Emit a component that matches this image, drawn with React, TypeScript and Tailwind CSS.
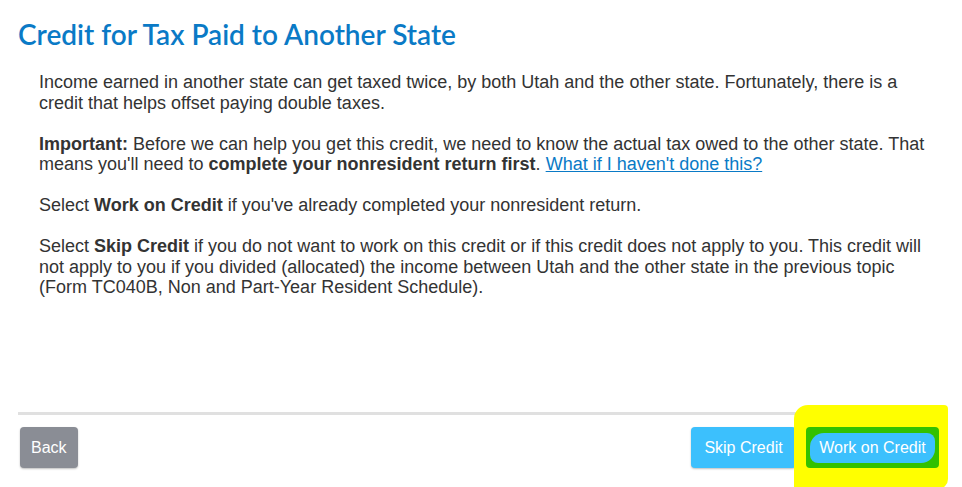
export default function App() {
  return (
    <div className="flex h-[487px] flex-col bg-white pl-[18px] pr-[16px] font-['Liberation_Sans',Arial,sans-serif] text-[#333]">
      <h1 className="mt-[18px] font-['Lato',sans-serif] text-[28px] font-semibold leading-[32px] text-[#0a7ac6]">
        Credit for Tax Paid to Another State
      </h1>

      <div className="mt-[22px] flex-1 space-y-[20.5px] pl-[21px] text-[18px] leading-[20.5px]">
        <p>
          Income earned in another state can get taxed twice, by both Utah and the other state. Fortunately, there is a
          credit that helps offset paying double taxes.
        </p>
        <p>
          <b>Important:</b> Before we can help you get this credit, we need to know the actual tax owed to the other
          state. That means you'll need to <b>complete your nonresident return first</b>.{" "}
          <a href="#" className="text-[#0a7ac6] underline">
            What if I haven't done this?
          </a>
        </p>
        <p>
          Select <b>Work on Credit</b> if you've already completed your nonresident return.
        </p>
        <p>
          Select <b>Skip Credit</b> if you do not want to work on this credit or if this credit does not apply to you.
          This credit will not apply to you if you divided (allocated) the income between Utah and the other state in
          the previous topic (Form TC040B, Non and Part-Year Resident Schedule).
        </p>
      </div>

      <div className="flex items-start justify-between border-t-[3px] border-[#e0e0e0] pb-[19px] pl-[2px] pr-[7px] pt-[12px]">
        <button className="h-[41px] rounded-[4px] bg-[#8a8d95] px-[11px] text-[16px] text-white shadow-[0_1px_2px_rgba(0,0,0,0.25)]">
          Back
        </button>
        <div className="flex gap-[10px]">
          <button className="h-[41px] w-[105px] rounded-[4px] bg-[#3cc0fd] text-[16px] text-white shadow-[0_1px_2px_rgba(0,0,0,0.25)]">
            Skip Credit
          </button>
          <div className="relative">
            <div className="absolute -bottom-[21px] -left-[12px] -right-[9px] -top-[22px] rounded-tl-[14px] rounded-tr-[4px] rounded-bl-[2px] rounded-br-[10px] bg-[#ffff00]" />
            <button className="relative flex h-[41px] w-[133px] items-center justify-center rounded-[4px] bg-[#33c100] text-[16px] text-white">
              <span className="rounded-tl-[14px] rounded-tr-[8px] rounded-bl-[8px] rounded-br-[14px] bg-[#3cc0fd] px-[9px] py-[5px] leading-[20px]">
                Work on Credit
              </span>
            </button>
          </div>
        </div>
      </div>
    </div>
  );
}
